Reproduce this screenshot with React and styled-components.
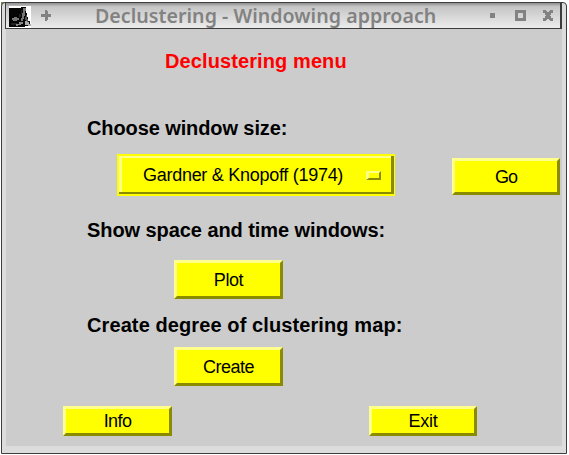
import React from "react";
import styled, { createGlobalStyle } from "styled-components";

const GlobalStyle = createGlobalStyle`
  * { box-sizing: border-box; }
  html, body { margin: 0; background: #fff; overflow: hidden; }
`;

const Desktop = styled.div`
  width: 569px;
  height: 455px;
  padding: 2px 2px 1px 1px;
  background: linear-gradient(#6f8f50, #6f8f50) 1px 2px / 4px 3px no-repeat, #fff;
`;

const Window = styled.main`
  width: 566px;
  height: 452px;
  border: 1px solid #3c3e40;
  border-radius: 4px 4px 0 0;
  background: #dcdcdc;
  padding: 0 4px 7px 3px;
  font-family: "Liberation Sans", Arial, sans-serif;
`;

const TitleBar = styled.header`
  display: flex;
  align-items: flex-start;
  height: 26px;
  border-left: 1px solid #3c3c3c;
  border-right: 2px solid #3c3c3c;
  border-bottom: 1px solid #3c3c3c;
  background: linear-gradient(#8a8a8a 0, #a0a0a0 1px, #a8a8a8 2px, #c0c0c0 3px, #c6c6c6 4px, #ececec 25px);
`;

const AppIcon = styled.svg`
  flex: none;
  width: 22px;
  height: 22px;
  margin: 3px 0 0 3px;
`;

const PinIcon = styled.svg`
  flex: none;
  width: 11px;
  height: 11px;
  margin: 7px 0 0 10px;
`;

const Title = styled.h1`
  width: 345px;
  margin: 0 0 0 43px;
  font: 600 19.6px/26px "Noto Sans", sans-serif;
  letter-spacing: ${(p) => p.$track}px;
  color: #828282;
  white-space: nowrap;
`;

const WindowControls = styled.svg`
  flex: none;
  width: 64px;
  height: 12px;
  margin: 7px 0 0 50px;
`;

const Content = styled.section`
  width: 556px;
  height: 417px;
  margin-left: 1px;
  padding-top: 20px;
  background: #ccc;
`;

const Heading = styled.h2`
  height: 24px;
  margin: 0 0 43px 159px;
  font-size: 20px;
  line-height: 24px;
  letter-spacing: ${(p) => p.$track}px;
  color: #f00;
  white-space: nowrap;
`;

const Label = styled.h3`
  height: 24px;
  margin: 0 0 0 81px;
  font-size: 20px;
  line-height: 24px;
  letter-spacing: ${(p) => p.$track}px;
  color: #000;
  white-space: nowrap;
`;

const Row = styled.div`
  display: flex;
  align-items: flex-start;
  height: ${(p) => p.$height}px;
  margin-top: ${(p) => p.$top}px;
  padding-left: ${(p) => p.$left}px;
`;

const Button = styled.button`
  flex: none;
  width: ${(p) => p.$width || 109}px;
  height: ${(p) => p.$height}px;
  margin: ${(p) => p.$offset || 0}px 0 0 ${(p) => p.$gap || 0}px;
  padding: 0;
  border: 3px solid;
  border-color: #ffff8b #8b8b00 #8b8b00 #ffff8b;
  background: #ff0;
  color: #000;
  font: 18px/20px "Liberation Sans", Arial, sans-serif;
  letter-spacing: ${(p) => p.$track || 0}px;
`;

const Select = styled.button`
  display: flex;
  align-items: center;
  flex: none;
  width: 278px;
  height: 42px;
  padding: 0 9px 0 24px;
  border: 2px solid #ff0;
  border-right-width: 1px;
  box-shadow: inset -3px -2px #8b8b00, inset 3px 2px #ffff8b;
  background: #ff0;
  color: #000;
  font: 18px/20px "Liberation Sans", Arial, sans-serif;
  letter-spacing: ${(p) => p.$track}px;
  white-space: nowrap;
`;

const SelectText = styled.span`
  width: 223px;
  text-align: left;
`;

const Indicator = styled.i`
  flex: none;
  width: 15px;
  height: 9px;
  border: 2px solid;
  border-width: 2px 2px 2px 3px;
  border-color: #ffff8b #8b8b00 #8b8b00 #ffff8b;
`;

function WindowTitleBar() {
  return (
    <TitleBar>
      <AppIcon viewBox="0 0 22 22" shapeRendering="crispEdges">
        <path fill="#fff" d="M0 0h22v22H0z" />
        <path fill="#060606" d="M0 2h12v-1h5v6h1v4h1v4h2v5h-5v1H0z" />
        <path fill="#222" d="M12 4h1v4h-1v3h-2V8h2zM2 17h6v2H2z" />
        <path fill="#777" d="M14 2h3v3h-1v5h-1v3h-1v2h-2v-3h1V7h1z" />
        <path fill="#555" d="M17 9h1v4h1v3h-2v-2h-1v-3h1z" />
        <path fill="#777" d="M5 11h3v1h2v2H8v1H4v-1H3v-2h2z" />
        <path fill="#888" d="M10 16h4v2h-2v1H9v1H7v-2h3z" />
        <path fill="#aaa" d="M16 15h2v1h2v2h2v2h-3v-1h-3z" />
      </AppIcon>
      <PinIcon viewBox="0 0 11 11" shapeRendering="crispEdges">
        <path fill="#828282" d="M4 0h2v1h1v3h3v3H7v3H6v1H4v-1H4V7H0V4h4z" />
      </PinIcon>
      <Title $track={0.03}>Declustering - Windowing approach</Title>
      <WindowControls viewBox="0 0 64 12" shapeRendering="crispEdges" fill="#828282">
        <path d="M0 3h5v5H0z" />
        <path fillRule="evenodd" d="M25 0h11v11H25zM28 3v5h5V3z" />
        <path d="M53 0h3v1h1v1h2V1h1V0h3v3h-2v2h-1v1h1v2h2v3h-3v-1h-1V9h-2v1h-1v1h-3V8h2V6h1V5h-1V3h-2z" />
      </WindowControls>
    </TitleBar>
  );
}

export default function App() {
  return (
    <>
      <GlobalStyle />
      <Desktop>
        <Window>
          <WindowTitleBar />
          <Content>
            <Heading $track={0.1}>Declustering menu</Heading>
            <Label $track={-0.1}>Choose window size:</Label>
            <Row $height={42} $top={14} $left={111}>
              <Select $track={-0.28}>
                <SelectText>Gardner &amp; Knopoff (1974)</SelectText>
                <Indicator />
              </Select>
              <Button $width={108} $height={37} $offset={4} $gap={57} $track={-1}>Go</Button>
            </Row>
            <Row $height={24} $top={22} $left={0}>
              <Label $track={-0.07}>Show space and time windows:</Label>
            </Row>
            <Row $height={39} $top={18} $left={168}>
              <Button $height={39} $track={-0.4}>Plot</Button>
            </Row>
            <Row $height={24} $top={14} $left={0}>
              <Label $track={0.1}>Create degree of clustering map:</Label>
            </Row>
            <Row $height={39} $top={10} $left={168}>
              <Button $height={39} $track={-0.5}>Create</Button>
            </Row>
            <Row $height={30} $top={20} $left={57}>
              <Button $height={30} $track={-0.6}>Info</Button>
              <Button $width={108} $height={30} $gap={197} $track={-0.3}>Exit</Button>
            </Row>
          </Content>
        </Window>
      </Desktop>
    </>
  );
}
